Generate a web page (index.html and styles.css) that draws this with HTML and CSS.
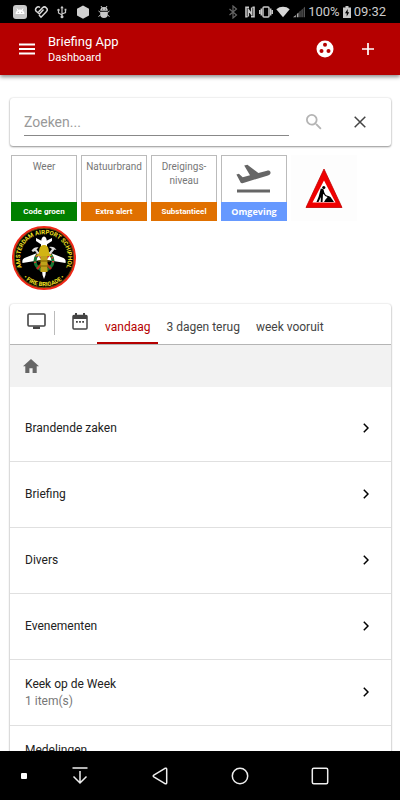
FILE: index.html
```html
<!DOCTYPE html>
<html lang="nl">
<head>
	<meta charset="UTF-8">
	<meta name="viewport" content="width=device-width, initial-scale=1">
	<title>Briefing App</title>
	<link rel="stylesheet" href="styles.css">
</head>
<body>
	<div class="statusbar">
		<div class="status-left">
			<svg width="14" height="14" viewBox="0 0 14 14"><rect width="14" height="14" rx="3" fill="#c8c8c8"/><path d="M2.500 9a4.500 4.500 0 0 1 9 0z" fill="#fff"/><path d="M4 3.500l1.200 2M10 3.500L8.800 5.500" stroke="#fff"/><circle cx="5.300" cy="7.300" r=".6" fill="#aaa"/><circle cx="8.700" cy="7.300" r=".6" fill="#aaa"/></svg>
			<svg width="14" height="14" viewBox="0 0 14 14" fill="none" stroke="#d8d8d8" stroke-width="1.500"><path d="M9.500 4.500L5.500 9 2 6a2.700 2.700 0 0 1 4-3.500M4.500 7l4-4.200a2.700 2.700 0 0 1 3.800 4L7 12.200 5 10"/></svg>
			<svg width="14" height="14" viewBox="0 0 14 14" fill="none" stroke="#c8c8c8" stroke-width="1.200"><path d="M7 2v10M7 10L3.500 8V5.500M7 9l3.500-1.500V5"/><path d="M5.300 3.200L7 .8l1.700 2.400zM9.600 3.800h1.800v1.800H9.600z" fill="#c8c8c8" stroke="none"/><circle cx="3.500" cy="5" r="1.200" fill="#c8c8c8" stroke="none"/><circle cx="7" cy="11.800" r="1.500" fill="#c8c8c8" stroke="none"/></svg>
			<svg width="14" height="14" viewBox="0 0 14 14"><path d="M7 .4l6 3.400v6.600L7 13.800l-6-3.400V3.800z" fill="#d0d0d0"/></svg>
			<svg width="14" height="14" viewBox="0 0 14 14" fill="#c8c8c8"><path d="M3.200 5.800a3.800 3.800 0 0 1 7.600 0zM3.200 6.700h7.600v2.600a3.800 3.800 0 0 1-7.600 0z"/><path d="M4 1l1.500 2.300M10 1L8.500 3.300M3.500 7.500L1.500 6M10.500 7.500l2-1.500M3.500 10l-2 1.500M10.500 10l2 1.500" stroke="#c8c8c8"/><path d="M5.300 4.200h.8M7.900 4.200h.8" stroke="#000" stroke-width=".8"/></svg>
		</div>
		<div class="status-right">
			<svg width="10" height="14" viewBox="0 0 10 14" fill="none" stroke="#666" stroke-width="1.200"><path d="M1.500 4l7 6L5 13V1l3.500 3-7 6"/></svg>
			<svg class="nfc" width="10" height="12" viewBox="0 0 10 12" fill="none" stroke="#c8c8c8" stroke-width="1.600"><path d="M4 1.200H1v9.600h1.500M6 10.800h3V1.200H7.500M3.300 10.500V3.500l3.400 5V1.500"/></svg>
			<svg class="vibrate" width="14" height="12" viewBox="0 0 14 12" fill="none" stroke="#c8c8c8" stroke-width="1.500"><rect x="4" y="1" width="6" height="10" rx="1"/><path d="M2.300 2.500v7M11.700 2.500v7M.6 4v4M13.400 4v4"/></svg>
			<svg class="wifi" width="14" height="12" viewBox="0 0 14 12"><path d="M.3 3.200a10.500 10.500 0 0 1 13.400 0L7 11.300z" fill="#d8d8d8"/></svg>
			<svg class="signal" width="12" height="12" viewBox="0 0 12.500 12"><path d="M0 11.500L3 9v2.500zM4 8l1.800-1.500v5H4z" fill="#aaa"/><path d="M6.500 5.800L8 4.500v7H6.500zM8.700 3.800L10.200 2.500v9H8.700zM11 1.800L12.500.5v11H11z" fill="#555"/></svg>
			<span>100%</span>
			<svg class="battery" width="8" height="12" viewBox="0 0 8 12"><path d="M2.500 0h3v1.500H8V12H0V1.500h2.500z" fill="#c8c8c8"/><path d="M4.700 3L2 7.200h1.700V10.500L6.200 6.300H4.700z" fill="#000"/></svg>
			<span class="clock">09:32</span>
		</div>
	</div>

	<header class="toolbar">
		<button class="icon-btn" type="button" aria-label="Menu">
			<svg width="16" height="12" viewBox="0 0 16 12" stroke="#fff" stroke-width="2"><path d="M0 1.500h16M0 6h16M0 10.500h16"/></svg>
		</button>
		<div class="titles">
			<h1>Briefing App</h1>
			<h2>Dashboard</h2>
		</div>
		<button class="icon-btn" type="button" aria-label="Groepen">
			<svg width="18" height="18" viewBox="0 0 18 18"><circle cx="9" cy="9" r="8.500" fill="#fff"/><g fill="#b50000"><circle cx="9" cy="4.800" r="2"/><circle cx="5.500" cy="11" r="2"/><circle cx="12.500" cy="11" r="2"/></g></svg>
		</button>
		<button class="icon-btn plus" type="button" aria-label="Toevoegen">
			<svg width="12" height="12" viewBox="0 0 12 12" stroke="#fff" stroke-width="1.700"><path d="M0 6h12M6 0v12"/></svg>
		</button>
	</header>

	<main class="content">
		<form class="card search">
			<input type="text" placeholder="Zoeken..." aria-label="Zoeken">
			<button class="icon-btn" type="button" aria-label="Zoek">
				<svg width="16" height="16" viewBox="3 3 18 18" fill="#b4b4b4"><path d="M15.500 14h-.79l-.28-.27A6.471 6.471 0 0 0 16 9.500 6.500 6.500 0 1 0 9.500 16c1.610 0 3.090-.59 4.230-1.570l.27.28v.79l5 4.990L20.490 19l-4.990-5zm-6 0C7.010 14 5 11.990 5 9.500S7.010 5 9.500 5 14 7.010 14 9.500 11.990 14 9.500 14z"/></svg>
			</button>
			<button class="icon-btn" type="reset" aria-label="Wissen">
				<svg width="12" height="12" viewBox="0 0 12 12" stroke="#444" stroke-width="1.500"><path d="M.7.7l10.600 10.600M11.300.7L.7 11.300"/></svg>
			</button>
		</form>

		<div class="tiles">
			<a class="tile green" href="#"><span class="tile-name">Weer</span><span class="tile-state">Code groen</span></a>
			<a class="tile orange" href="#"><span class="tile-name">Natuurbrand</span><span class="tile-state">Extra alert</span></a>
			<a class="tile orange" href="#"><span class="tile-name">Dreigings-<br>niveau</span><span class="tile-state">Substantieel</span></a>
			<a class="tile blue" href="#">
				<svg class="plane" width="36" height="30" viewBox="0 0 36 30" fill="#666"><path d="M1 25.500h33v3H1z"/><path d="M.4 10.500l2.500-.7 3.800 3.400 7.300-2L8.200 1.600 11.400.7l11 8.300 8.600-2.300c1.700-.5 3.200 0 3.500 1.500.3 1.600-.9 2.800-2.500 3.200L6.500 19.300l-1.600-.2z"/></svg>
				<span class="tile-state">Omgeving</span>
			</a>
			<a class="tile plain roadworks" href="#" aria-label="Wegwerkzaamheden">
				<svg width="38" height="40" viewBox="0 0 38 40">
					<path d="M19 1L37 39.500H1z" fill="#f00000" stroke="#c00000" stroke-width=".8" stroke-linejoin="round"/>
					<path d="M19 12.500l11.500 22h-23z" fill="#fff"/>
					<circle cx="18.800" cy="19.500" r="1.600"/>
					<path d="M15.800 20.500l2.700.8 1 4.200-1.500 1-.5 7.500h-1.800l.2-5-2.400 5h-2l2.200-5.500z"/>
					<path d="M16.500 22l4 5.500 3.500 1.500" fill="none" stroke="#000" stroke-width="1.200"/>
					<path d="M19 34l1.500-2.500 3-3.500 2 1 3.500 5z"/>
				</svg>
			</a>
			<a class="tile plain" href="#" aria-label="Fire Brigade Schiphol">
				<svg width="66" height="66" viewBox="0 0 66 66">
					<defs>
						<path id="arc-top" d="M16 50a24 24 0 1 1 34 0"/>
						<path id="arc-bottom" d="M5.700 41a28.500 28.500 0 0 0 54.600 0"/>
					</defs>
					<circle cx="33" cy="33" r="31" fill="#000" stroke="#f02818" stroke-width="2"/>
					<circle cx="33" cy="33" r="29.700" fill="none" stroke="#b07810" stroke-width=".6"/>
					<path d="M33 11.500c2 0 3 3 3 7v8l16.500 6.500c2 1 2.500 3 2 5L36 35l-1.500 15L33 54l-1.500-4L30 35l-18.500 3c-.5-2 0-4 2-5L30 26.500v-8c0-4 1-7 3-7z" fill="#fff"/>
					<path d="M31 16l-6-3v3l6 4zM35 16l6-3v3l-6 4z" fill="#fff"/>
					<circle cx="33" cy="36" r="9" fill="none" stroke="#167832" stroke-width="3"/>
					<circle cx="33" cy="36" r="9" fill="none" stroke="#e04030" stroke-width="2" stroke-dasharray="1.500 5"/>
					<path d="M26 28l14 16M40 28L26 44" stroke="#c92b20" stroke-width="2"/>
					<path d="M20.500 25.500c2-3 5-4 7-3l-2 2 5 6-1.500 1.500-5-6-2 1zM38 22c3-1 6 0 7.500 3l-2-.5-5 6-1.500-1.500 4-5z" fill="#ddd"/>
					<path d="M28 28c0-6 2-8 5-8s5 2 5 8l3 3H25z" fill="#d2b414"/>
					<path d="M29.500 31h7v16h-7z" fill="#bfa31a"/>
					<path d="M27 36h12M27 41h12" stroke="#806500"/>
					<text class="badge-text"><textPath href="#arc-top" startOffset="50%" text-anchor="middle">AMSTERDAM AIRPORT SCHIPHOL</textPath></text>
					<text class="badge-text"><textPath href="#arc-bottom" startOffset="50%" text-anchor="middle">• FIRE BRIGADE •</textPath></text>
				</svg>
			</a>
		</div>

		<section class="card board">
			<nav class="tabs">
				<button class="view-btn screen" type="button" aria-label="Scherm">
					<svg width="19" height="16" viewBox="0 0 19 16"><rect x="1" y="1" width="17" height="12" rx="1" fill="none" stroke="#444" stroke-width="1.600"/><path d="M6 13.500h7V16H6z" fill="#444"/></svg>
				</button>
				<button class="view-btn calendar" type="button" aria-label="Kalender">
					<svg width="16" height="17" viewBox="0 0 16 17"><rect x="1" y="2.500" width="14" height="13.500" rx="1" fill="none" stroke="#444" stroke-width="1.500"/><path d="M1 2h14v4H1zM3 0h2v3H3zM11 0h2v3h-2zM4 8h1.800v1.800H4zM7.100 8h1.800v1.800H7.100zM10.200 8H12v1.800h-1.800z" fill="#444"/></svg>
				</button>
				<a class="tab on" href="#">vandaag</a>
				<a class="tab" href="#">3 dagen terug</a>
				<a class="tab" href="#">week vooruit</a>
			</nav>
			<div class="crumbs">
				<a href="#" aria-label="Home"><svg width="16" height="14" viewBox="0 0 16 14" fill="#666"><path d="M8 0l8 7.300h-2.300V14H9.600V9.300H6.400V14H2.300V7.300H0z"/></svg></a>
			</div>
			<ul class="list">
				<li><a href="#"><span class="item">Brandende zaken</span><svg class="chevron" width="6" height="12" viewBox="0 0 6 12"><path d="M.8.8L5 5 .8 9.200"/></svg></a></li>
				<li><a href="#"><span class="item">Briefing</span><svg class="chevron" width="6" height="12" viewBox="0 0 6 12"><path d="M.8.8L5 5 .8 9.200"/></svg></a></li>
				<li><a href="#"><span class="item">Divers</span><svg class="chevron" width="6" height="12" viewBox="0 0 6 12"><path d="M.8.8L5 5 .8 9.200"/></svg></a></li>
				<li><a href="#"><span class="item">Evenementen</span><svg class="chevron" width="6" height="12" viewBox="0 0 6 12"><path d="M.8.8L5 5 .8 9.200"/></svg></a></li>
				<li><a href="#"><span class="item">Keek op de Week<small>1 item(s)</small></span><svg class="chevron" width="6" height="12" viewBox="0 0 6 12"><path d="M.8.8L5 5 .8 9.200"/></svg></a></li>
				<li><a href="#"><span class="item">Medelingen<small>&nbsp;</small></span><svg class="chevron" width="6" height="12" viewBox="0 0 6 12"><path d="M.8.8L5 5 .8 9.200"/></svg></a></li>
			</ul>
		</section>
	</main>

	<div class="navbar">
		<svg class="dot" width="6" height="6" viewBox="0 0 6 6"><rect width="6" height="6" rx="1" fill="#fff"/></svg>
		<button type="button" aria-label="Omlaag"><svg width="16" height="18" viewBox="0 0 16 18" fill="none" stroke="#eee" stroke-width="1.500"><path d="M.5 1h15M8 4v12M1.500 9.500L8 16l6.500-6.500"/></svg></button>
		<button type="button" aria-label="Terug"><svg width="16" height="18" viewBox="0 0 16 18" fill="none" stroke="#eee" stroke-width="1.500" stroke-linejoin="round"><path d="M1.800 8.200L13 1.300c.9-.4 1.700 0 1.700.9v13.600c0 .9-.8 1.300-1.700.9L1.800 9.800q-1.200-.8 0-1.600z"/></svg></button>
		<button type="button" aria-label="Start"><svg width="18" height="18" viewBox="0 0 18 18" fill="none" stroke="#eee" stroke-width="1.500"><circle cx="9" cy="9" r="7.700"/></svg></button>
		<button type="button" aria-label="Recent"><svg width="18" height="18" viewBox="0 0 18 18" fill="none" stroke="#eee" stroke-width="1.500"><rect x="1.300" y="1.300" width="15.400" height="15.400" rx="1.500"/></svg></button>
	</div>
</body>
</html>
```
FILE: styles.css
```css
* {
    box-sizing: border-box;
    margin: 0;
    padding: 0;
}
body {
    display: flex;
    flex-direction: column;
    height: 100vh;
    overflow: hidden;
    background: #fff;
    color: #222;
    font-family: Roboto, "Liberation Sans", sans-serif;
    font-size: 12px;
}
a {
    color: inherit;
    text-decoration: none;
}
button {
    border: 0;
    background: none;
    font: inherit;
    cursor: pointer;
}
svg {
    display: block;
    flex: none;
}

/* status bar */
.statusbar {
    display: flex;
    flex: none;
    justify-content: space-between;
    height: 23px;
    padding: 0 14px 0 13px;
    background: #000;
    color: #ccc;
    font-size: 13px;
    line-height: 24px;
}
.status-left, .status-right {
    display: flex;
    align-items: center;
}
.status-left {
    gap: 7px;
}
.status-right {
    gap: 3px;
}
.nfc {
    margin-left: 4px;
}
.vibrate {
    margin-left: 1px;
}

/* toolbar */
.toolbar {
    position: relative;
    z-index: 1;
    display: flex;
    flex: none;
    align-items: center;
    height: 52px;
    padding: 0 16px 0 11px;
    background: #b50000;
    color: #fff;
    box-shadow: 0 2px 4px rgba(0,0,0,0.45);
}
.icon-btn {
    display: flex;
    flex: none;
    align-items: center;
    justify-content: center;
    width: 32px;
    height: 32px;
}
.titles {
    flex: 1;
    padding-left: 5px;
}
.titles h1 {
    font-size: 13px;
    font-weight: 400;
    line-height: 17px;
}
.titles h2 {
    font-size: 11px;
    font-weight: 400;
    line-height: 16px;
}
.plus {
    margin-left: 11px;
}

/* content */
.content {
    flex: 1;
    min-height: 0;
    overflow: hidden;
    padding: 23px 9px 0 10px;
}
.card {
    border-radius: 3px;
    background: #fff;
    box-shadow: 0 1px 2px rgba(0,0,0,0.4), 0 0 2px rgba(0,0,0,0.15);
}
.search {
    display: flex;
    align-items: center;
    height: 48px;
    padding: 0 15px 0 14px;
}
.search input {
    flex: 1;
    min-width: 0;
    height: 28px;
    border: 0;
    border-bottom: 1px solid #888;
    outline: none;
    background: none;
    color: #222;
    font: inherit;
    font-size: 14px;
}
.search input::placeholder {
    color: #999;
}
.search .icon-btn {
    margin-left: 14px;
}
.search .icon-btn:first-of-type {
    margin-left: 9px;
}

.tiles {
    display: flex;
    flex-wrap: wrap;
    gap: 4px;
    padding: 9px 1px 13px;
}
.tile {
    display: flex;
    flex-direction: column;
    align-items: center;
    justify-content: space-between;
    width: 66px;
    height: 66px;
    border: 1px solid #bbb;
    color: #777;
    font-size: 10px;
    line-height: 14px;
    text-align: center;
}
.tile-name {
    padding-top: 4px;
}
.tile-state {
    align-self: stretch;
    margin: 0 -1px -1px;
    color: #fff;
    font-size: 8px;
    font-weight: 700;
    line-height: 19px;
}
.green .tile-state {
    background: #008000;
}
.orange .tile-state {
    background: #e07000;
}
.blue .tile-state {
    background: #6699ff;
    font-family: "Open Sans", sans-serif;
    font-size: 9px;
}
.plane {
    margin-top: 8px;
}
.plain {
    justify-content: center;
    border: 0;
}
.roadworks {
    background: #fdfdfd;
}
.badge-text {
    fill: #f0e020;
    font-size: 6px;
    font-weight: 700;
}

/* board */
.tabs {
    display: flex;
    height: 41px;
    border-bottom: 1px solid #b5b5b5;
    color: #444;
    font-size: 12px;
}
.view-btn {
    display: flex;
    align-items: center;
    justify-content: center;
    height: 24px;
    margin-top: 7px;
}
.screen {
    width: 45px;
    padding-left: 8px;
    padding-bottom: 4px;
    border-right: 1px solid #bbb;
}
.calendar {
    width: 42px;
    padding-left: 8px;
    padding-bottom: 4px;
}
.tab {
    padding: 6px 8px 0;
    border-bottom: 2px solid transparent;
    line-height: 34px;
    white-space: nowrap;
}
.tab.on {
    border-color: #b50000;
    color: #b50000;
}
.crumbs {
    display: flex;
    align-items: center;
    height: 42px;
    padding-left: 13px;
    background: #f2f2f2;
}
.list {
    padding-top: 9px;
    list-style: none;
}
.list a {
    display: flex;
    align-items: center;
    justify-content: space-between;
    height: 66px;
    padding: 0 22px 0 15px;
    border-bottom: 1px solid #e0e0e0;
}
.item {
    line-height: 17px;
}
.item small {
    display: block;
    color: #777;
    font-size: 12px;
}
.chevron {
    fill: none;
    stroke: #000;
    stroke-width: 1.5px;
}

/* navigation bar */
.navbar {
    display: grid;
    flex: none;
    grid-template-columns: 1fr 2fr 2fr 2fr 2fr 1fr;
    align-items: center;
    justify-items: center;
    height: 49px;
    background: #000;
}
.dot {
    margin-left: 8px;
}
```
